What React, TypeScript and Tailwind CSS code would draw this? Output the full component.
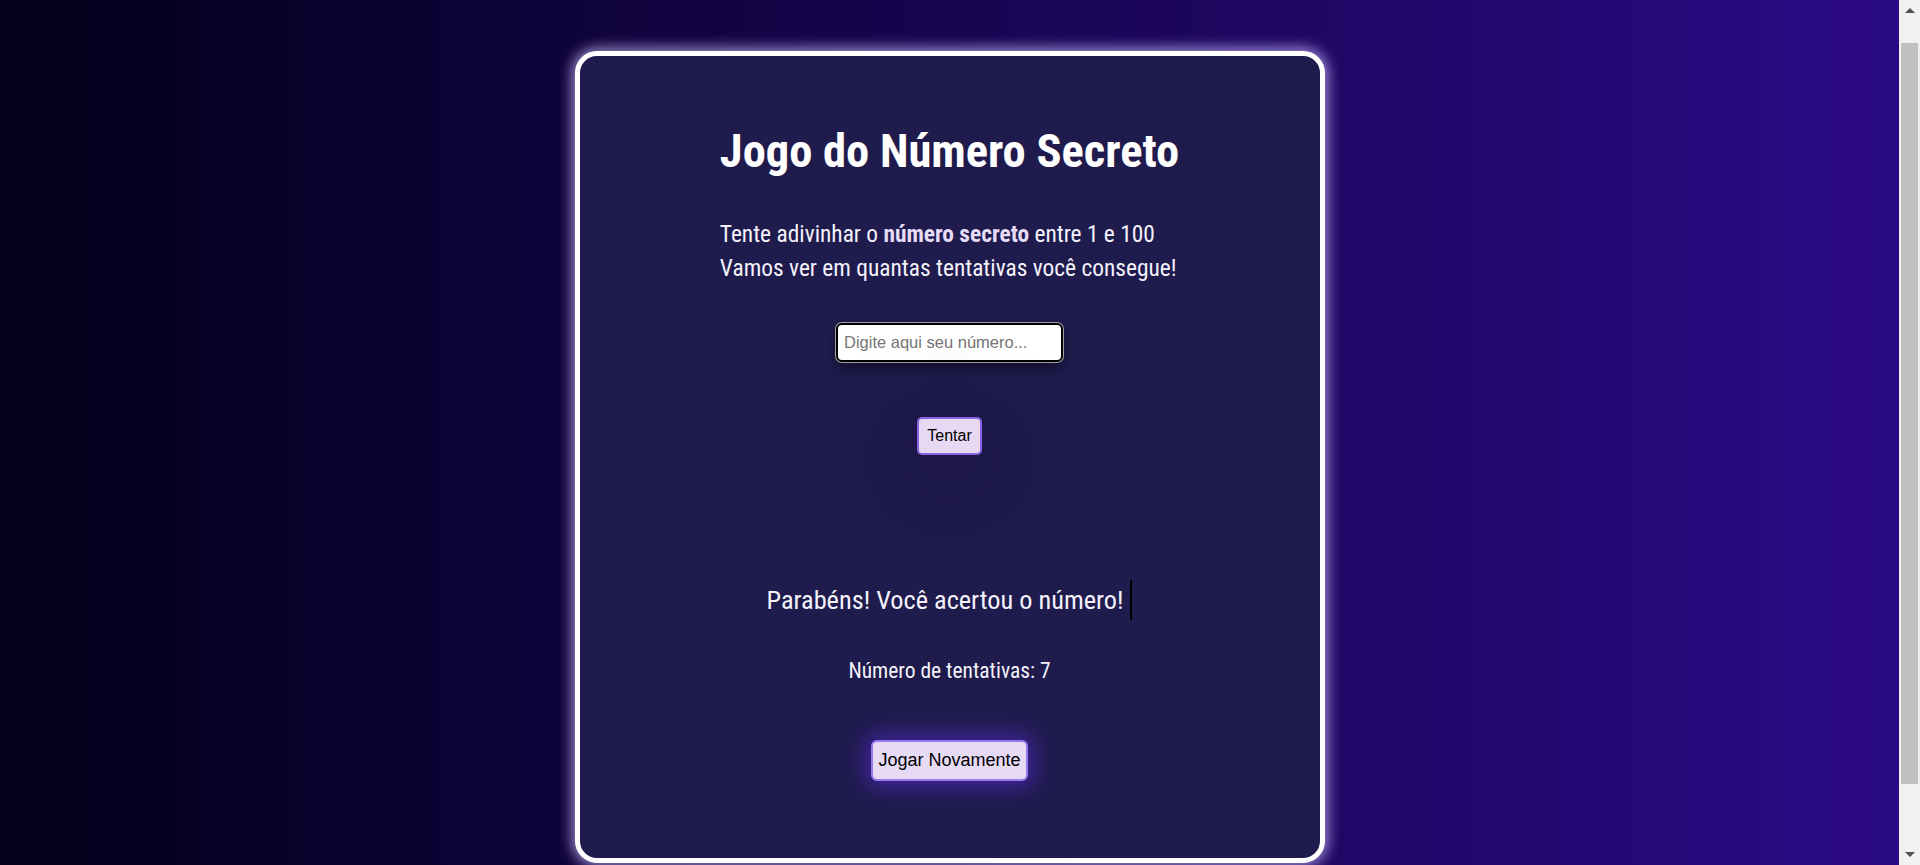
import { useState } from "react";

const narrow = "font-['Liberation_Sans_Narrow','Roboto_Condensed','DejaVu_Sans_Condensed',Roboto,sans-serif]";

function ScrollBar() {
  return (
    <div className="flex h-screen w-[21px] shrink-0 flex-col bg-[#f1f1f1]">
      <div className="flex h-[17px] items-center justify-center pt-[4px]">
        <div className="h-0 w-0 border-x-[5px] border-b-[5px] border-x-transparent border-b-[#505050]" />
      </div>
      <div className="mx-[2px] mt-[26px] h-[741px] bg-[#c1c1c1]" />
      <div className="flex-1" />
      <div className="flex h-[17px] items-center justify-center pb-[4px]">
        <div className="h-0 w-0 border-x-[5px] border-t-[5px] border-x-transparent border-t-[#505050]" />
      </div>
    </div>
  );
}

export default function App() {
  const [guess, setGuess] = useState("");

  return (
    <div className="flex w-full items-start bg-[linear-gradient(to_right,#02001a,#2c0a87)]">
      <div className="flex-1 pt-[51px] pb-[108px]">
        <main className="mx-auto flex h-[812px] w-[750px] flex-col items-center rounded-[22px] border-[5px] border-white bg-[#1f1b4d] shadow-[0_0_14px_3px_rgba(205,190,255,0.75)]">
          <div className={`mt-[67px] w-fit text-left ${narrow}`}>
            <h1 className="text-[46.5px] leading-[56px] font-bold text-white">Jogo do Número Secreto</h1>
            <p className="mt-[38px] text-[23.4px] leading-[34px] text-[#f4f2fa]">
              Tente adivinhar o <strong className="font-bold text-[#e6dcf8]">número secreto</strong> entre 1 e 100
              <br />
              Vamos ver em quantas tentativas você consegue!
            </p>
          </div>

          <input
            type="number"
            value={guess}
            onChange={(e) => setGuess(e.target.value)}
            placeholder="Digite aqui seu número..."
            className="mt-[38px] h-[39px] w-[227px] rounded-[6px] border-2 border-black bg-white px-[6px] font-['Liberation_Sans',Arial,sans-serif] text-[16.5px] text-black shadow-[0_6px_12px_rgba(0,0,0,0.45)] ring-1 ring-[#a0a0a0] outline-none placeholder:text-[#767676] [appearance:textfield]"
          />

          <button className="mt-[55px] rounded-[5px] border-2 border-[#8a62e6] bg-[#e7d9f3] px-2 py-2 font-['Liberation_Sans',Arial,sans-serif] text-[16px] leading-[18px] text-black shadow-[0_24px_80px_30px_rgba(10,8,30,0.18)]">
            Tentar
          </button>

          <h2
            className={`mt-[125px] inline-block border-r-2 border-black pr-[7px] text-[26.3px] leading-[40px] text-[#f4f2fa] ${narrow}`}
          >
            Parabéns! Você acertou o número!
          </h2>

          <p className={`mt-[37px] text-[21.5px] leading-[28px] text-[#f4f2fa] ${narrow}`}>Número de tentativas: 7</p>

          <button className="mt-[55px] rounded-[6px] border-2 border-[#9a78ee] bg-[#e7daf4] px-[5px] py-[8px] font-['Liberation_Sans',Arial,sans-serif] text-[18px] leading-[21px] text-black shadow-[0_0_22px_6px_rgba(90,45,210,0.6)]">
            Jogar Novamente
          </button>
        </main>
      </div>
      <ScrollBar />
    </div>
  );
}
